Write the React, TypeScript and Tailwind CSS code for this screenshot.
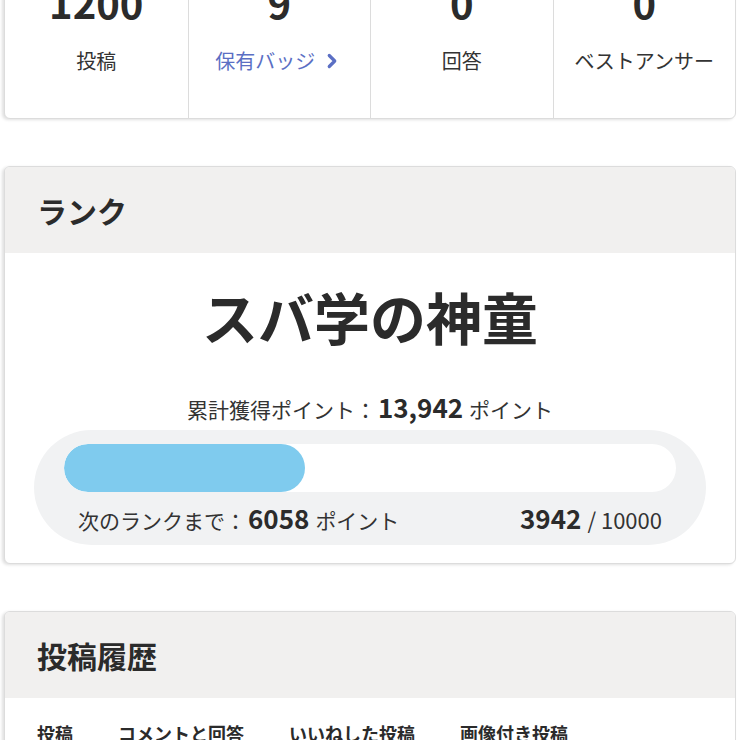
import { ChevronRight } from 'lucide-react';

const font = { fontFamily: '"Noto Sans CJK JP", "Noto Sans", sans-serif' };

const stats = [
  { value: '1200', label: '投稿' },
  { value: '9', label: '保有バッジ', link: true },
  { value: '0', label: '回答' },
  { value: '0', label: 'ベストアンサー' },
];

const tabs = ['投稿', 'コメントと回答', 'いいねした投稿', '画像付き投稿'];

function Card({ className = '', children }: { className?: string; children: React.ReactNode }) {
  return (
    <div
      className={`mx-[4px] border border-[#dcdcdc] rounded-md bg-white overflow-hidden shadow-[-2px_1px_3px_rgba(0,0,0,0.12)] ${className}`}
    >
      {children}
    </div>
  );
}

function SectionHeader({ title }: { title: string }) {
  return (
    <div className="h-[86px] bg-[#f1f0ef] flex items-center px-[32px]">
      <h2 className="text-[30px] font-bold text-[#2b2b2b]">{title}</h2>
    </div>
  );
}

export default function App() {
  const current = 3942;
  const goal = 10000;
  const pct = (current / goal) * 100;

  return (
    <div className="w-[740px] h-[740px] overflow-hidden bg-white text-[#2f2f2f]" style={font}>
      {/* stats */}
      <Card className="mt-[-50px] rounded-t-none">
        <div className="grid grid-cols-4">
          {stats.map((s, i) => (
            <div
              key={s.label}
              className={`flex flex-col items-center pt-[27px] pb-[43px] ${i > 0 ? 'border-l border-[#dcdcdc]' : ''}`}
            >
              <div className="text-[40px] font-bold leading-[48px] text-[#2b2b2b]">{s.value}</div>
              <div
                className={`mt-[21px] text-[20px] leading-[28px] flex items-center gap-[6px] ${
                  s.link ? 'text-[#5b6fc4]' : 'text-[#333]'
                }`}
              >
                {s.label}
                {s.link && <ChevronRight className="w-[22px] h-[22px]" strokeWidth={3.5} />}
              </div>
            </div>
          ))}
        </div>
      </Card>

      {/* rank */}
      <Card className="mt-[47px]">
        <SectionHeader title="ランク" />
        <div className="flex flex-col items-center pt-[25px] pb-[18px]">
          <div className="text-[56px] font-bold leading-[76px] text-[#2b2b2b]">スバ学の神童</div>
          <div className="mt-[40px] flex items-baseline text-[21px] text-[#333] leading-[26px]">
            累計獲得ポイント：
            <span className="ml-[2px] text-[26px] font-bold text-[#2b2b2b]">13,942</span>
            <span className="ml-[6px]">ポイント</span>
          </div>
          <div className="self-stretch mx-[29px] mt-[8px] rounded-full bg-[#f1f2f3] px-[30px] pt-[14px] pb-[10px]">
            <div className="h-[48px] rounded-full bg-white overflow-hidden">
              <div className="h-full rounded-full bg-[#7fcbee]" style={{ width: `${pct}%` }} />
            </div>
            <div className="mt-[11px] px-[14px] flex items-baseline justify-between leading-[30px]">
              <div className="flex items-baseline text-[21px] text-[#333]">
                次のランクまで：
                <span className="ml-[2px] text-[26px] font-bold text-[#2b2b2b]">6058</span>
                <span className="ml-[6px]">ポイント</span>
              </div>
              <div className="flex items-baseline text-[22px] text-[#333]">
                <span className="text-[26px] font-bold text-[#2b2b2b]">3942</span>
                <span className="ml-[6px]">/ 10000</span>
              </div>
            </div>
          </div>
        </div>
      </Card>

      {/* history */}
      <Card className="mt-[47px]">
        <SectionHeader title="投稿履歴" />
        <div className="flex gap-[45px] px-[32px] pt-[22px] text-[18px] font-bold text-[#2b2b2b]">
          {tabs.map((t) => (
            <span key={t}>{t}</span>
          ))}
        </div>
      </Card>
    </div>
  );
}
